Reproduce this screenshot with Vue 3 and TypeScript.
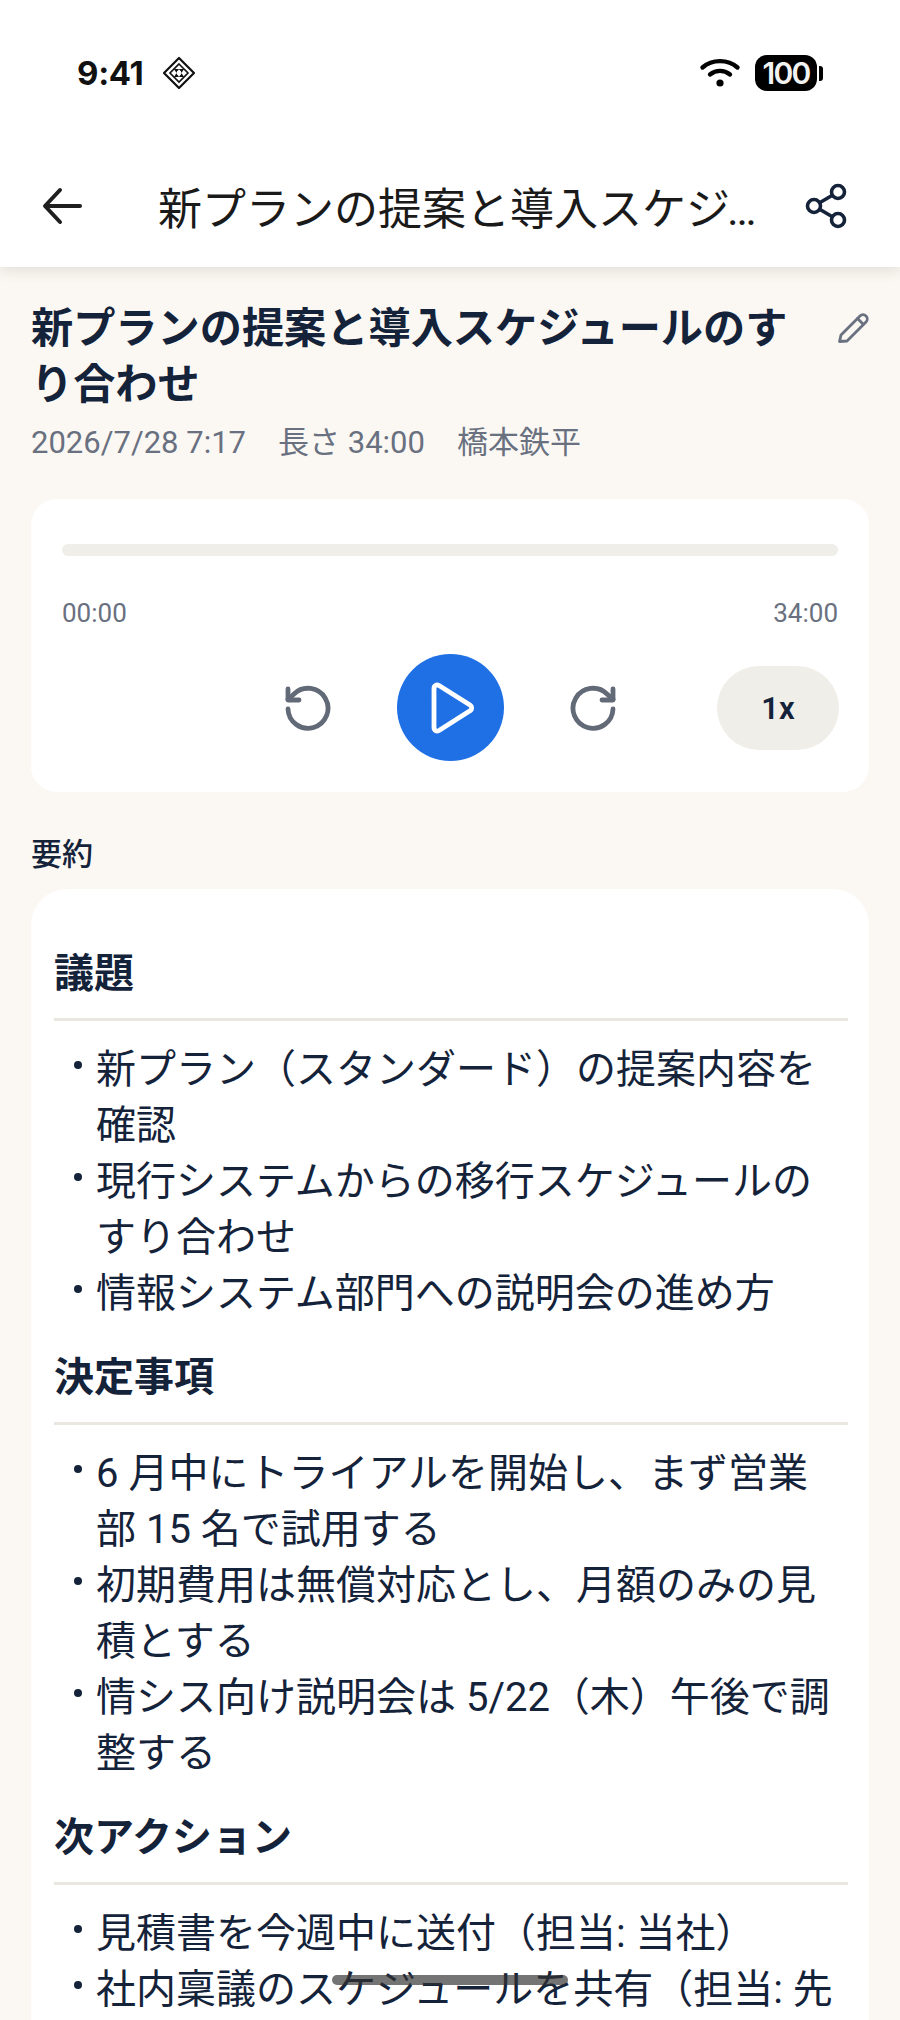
<script setup lang="ts">
interface Section {
  title: string
  items: string[]
}
const sections: Section[] = [
  {
    title: '議題',
    items: [
      '新プラン（スタンダード）の提案内容を確認',
      '現行システムからの移行スケジュールのすり合わせ',
      '情報システム部門への説明会の進め方',
    ],
  },
  {
    title: '決定事項',
    items: [
      '6 月中にトライアルを開始し、まず営業部 15 名で試用する',
      '初期費用は無償対応とし、月額のみの見積とする',
      '情シス向け説明会は 5/22（木）午後で調整する',
    ],
  },
  {
    title: '次アクション',
    items: ['見積書を今週中に送付（担当: 当社）', '社内稟議のスケジュールを共有（担当: 先方）'],
  },
]
</script>

<template>
  <div class="screen">
    <div class="top">
      <div class="status">
        <div class="status-left">
          <span class="clock">9:41</span>
          <svg class="diamond" width="34" height="34" viewBox="0 0 34 34" fill="none" stroke="#111" stroke-width="2.2">
            <path d="M17 2 32 17 17 32 2 17Z" stroke-linejoin="round" />
            <path d="M17 8 26 17 17 26 8 17Z" stroke-width="1.6" />
            <path d="M12 13h10l-5 8zM12 21h10l-5-8z" fill="#111" stroke="none" />
            <circle cx="17" cy="17" r="2.4" fill="#fff" stroke="none" />
          </svg>
        </div>
        <div class="status-right">
          <svg width="42" height="30" viewBox="0 0 40 30" fill="none" stroke="#000" stroke-linecap="round" stroke-width="4.4">
            <path d="M2.5 9.5C12 1 28 1 37.5 9.5" />
            <path d="M10 16.5c6-4.8 14-4.8 20 0" />
            <circle cx="20" cy="25" r="3.6" fill="#000" stroke="none" />
          </svg>
          <div class="battery">
            <span class="battery-body">100</span>
            <span class="battery-cap"></span>
          </div>
        </div>
      </div>
      <header class="appbar">
        <svg class="back" width="44" height="44" viewBox="0 0 44 44" fill="none" stroke="#1f1f1f" stroke-width="4" stroke-linecap="round" stroke-linejoin="round">
          <path d="M40 22H6M20 6 5 22 20 38" />
        </svg>
        <div class="appbar-title">新プランの提案と導入スケジュールのすり合わせ</div>
        <svg class="share" width="46" height="46" viewBox="0 0 46 46" fill="none" stroke="#14233a" stroke-width="3.6">
          <circle cx="34" cy="9" r="6.500" />
          <circle cx="10" cy="23" r="6.500" />
          <circle cx="34" cy="37" r="6.500" />
          <path d="M15.600 19.700 28.400 12.300M15.600 26.300 28.400 33.700" />
        </svg>
      </header>
    </div>

    <main class="content">
      <div class="title-row">
        <h1 class="title">新プランの提案と導入スケジュールのすり合わせ</h1>
        <svg class="pencil" width="36" height="36" viewBox="0 0 36 36" fill="none" stroke="#697080" stroke-width="2.8" stroke-linejoin="round" stroke-linecap="round">
          <path d="M5.500 30.500 7 24 26 5a4.200 4.200 0 0 1 6 6L13 30Z" />
          <path d="M23.500 7.500l5.500 5.500" />
        </svg>
      </div>
      <div class="meta">
        <span>2026/7/28 7:17</span>
        <span>長さ 34:00</span>
        <span>橋本鉄平</span>
      </div>

      <section class="player">
        <div class="track"></div>
        <div class="times">
          <span>00:00</span>
          <span>34:00</span>
        </div>
        <div class="controls">
          <svg class="skip" width="48" height="48" viewBox="0 0 48 48" fill="none" stroke="#626977" stroke-width="4.800" stroke-linecap="round" stroke-linejoin="round">
            <path d="M4 25a20 20 0 1 0 6-15L4 15.500" />
            <path d="M4 5v11h11" />
          </svg>
          <button class="play" type="button">
            <svg width="46" height="52" viewBox="0 0 46 52" fill="none" stroke="#fff" stroke-width="4.800" stroke-linejoin="round">
              <path d="M4 6.500c0-3 2.800-4.300 5-3l31 19.500c2.300 1.400 2.300 4.500 0 5.800L9 48.500c-2.400 1.400-5 0-5-3Z" />
            </svg>
          </button>
          <svg class="skip" width="48" height="48" viewBox="0 0 48 48" fill="none" stroke="#626977" stroke-width="4.800" stroke-linecap="round" stroke-linejoin="round">
            <path d="M44 25a20 20 0 1 1-6-15l6 5.500" />
            <path d="M44 5v11H33" />
          </svg>
          <button class="speed" type="button">1x</button>
        </div>
      </section>

      <div class="label">要約</div>

      <section class="summary">
        <div v-for="section in sections" :key="section.title" class="block">
          <h2 class="block-title">{{ section.title }}</h2>
          <ul class="list">
            <li v-for="item in section.items" :key="item">{{ item }}</li>
          </ul>
        </div>
      </section>
    </main>
    <div class="home-bar"></div>
  </div>
</template>

<style>
html,
body {
  margin: 0;
  background: #fbf8f3;
}
</style>

<style scoped>
.screen {
  position: relative;
  width: 900px;
  height: 2020px;
  overflow: hidden;
  background: #fbf8f3;
  font-family: Roboto, 'Noto Sans CJK JP', sans-serif;
  color: #14233a;
}
.top {
  background: #fff;
  box-shadow: 0 4px 12px rgba(60, 55, 40, 0.13);
  position: relative;
  z-index: 1;
}
.status {
  height: 145px;
  padding: 53px 77px 0 77px;
  box-sizing: border-box;
  display: flex;
  justify-content: space-between;
  align-items: flex-start;
}
.status-left,
.status-right {
  display: flex;
  align-items: center;
  height: 40px;
}
.clock {
  font-family: Inter, sans-serif;
  font-size: 33px;
  font-weight: 700;
  color: #111;
  letter-spacing: -0.3px;
}
.diamond {
  margin-left: 18px;
}
.status-right {
  gap: 14px;
}
.battery {
  display: flex;
  align-items: center;
  gap: 2px;
}
.battery-body {
  width: 62px;
  height: 36px;
  line-height: 36px;
  border-radius: 12px;
  background: #000;
  color: #f2f2f2;
  text-align: center;
  font-family: Inter, sans-serif;
  font-size: 30px;
  font-weight: 600;
  letter-spacing: -1.8px;
}
.battery-cap {
  width: 4px;
  height: 15px;
  border-radius: 0 3px 3px 0;
  background: #000;
}
.appbar {
  height: 122px;
  padding: 0 50px 0 40px;
  display: flex;
  align-items: center;
  box-sizing: border-box;
}
.appbar-title {
  flex: 1;
  min-width: 0;
  margin: 0 34px 0 74px;
  font-size: 44px;
  font-weight: 400;
  color: #1a1a1a;
  white-space: nowrap;
  overflow: hidden;
  text-overflow: ellipsis;
}
.content {
  padding: 34px 31px 0;
}
.title-row {
  display: flex;
  align-items: flex-start;
  gap: 22px;
}
.title {
  flex: 1;
  margin: 0;
  font-size: 42.200px;
  line-height: 56px;
  font-weight: 700;
  color: #14233a;
}
.pencil {
  margin-top: 10px;
  margin-right: -1px;
  flex: none;
}
.meta {
  display: flex;
  gap: 32px;
  margin-top: 7px;
  font-size: 31px;
  line-height: 46px;
  color: #697080;
}
.player {
  margin-top: 33px;
  height: 293px;
  padding: 45px 31px 0;
  box-sizing: border-box;
  background: #fff;
  border-radius: 26px;
}
.track {
  height: 12px;
  border-radius: 6px;
  background: #f0eee8;
}
.times {
  display: flex;
  justify-content: space-between;
  margin-top: 40px;
  font-size: 26px;
  line-height: 34px;
  color: #697080;
}
.controls {
  position: relative;
  display: flex;
  justify-content: center;
  align-items: center;
  gap: 65px;
  margin-top: 24px;
}
.skip {
  flex: none;
}
.play {
  width: 107px;
  height: 107px;
  border: 0;
  padding: 0 0 0 6px;
  border-radius: 50%;
  background: #1f6fe5;
  display: flex;
  align-items: center;
  justify-content: center;
}
.speed {
  position: absolute;
  right: -1px;
  top: 12px;
  width: 122px;
  height: 84px;
  border: 0;
  padding: 0;
  border-radius: 42px;
  background: #f0eee8;
  color: #14233a;
  font-family: Roboto, sans-serif;
  font-size: 31px;
  font-weight: 600;
}
.label {
  margin-top: 42px;
  font-size: 31px;
  line-height: 42px;
  font-weight: 500;
  color: #14233a;
}
.summary {
  margin-top: 13px;
  padding: 43px 21px 40px 23px;
  background: #fff;
  border-radius: 36px;
}
.block-title {
  margin: 0;
  padding: 14px 0 16px;
  font-size: 40px;
  line-height: 56px;
  font-weight: 700;
  border-bottom: 3px solid #e9e7df;
  color: #14233a;
}
.list {
  margin: 0;
  padding: 21px 4px 14px 0;
  list-style: none;
}
.list li {
  position: relative;
  padding-left: 42px;
  font-size: 40px;
  line-height: 56px;
  color: #14233a;
}
.list li::before {
  content: '';
  position: absolute;
  left: 20px;
  top: 19px;
  width: 8px;
  height: 8px;
  border-radius: 50%;
  background: #14233a;
}
.home-bar {
  position: absolute;
  left: 332px;
  top: 1975px;
  width: 236px;
  height: 10px;
  border-radius: 5px;
  background: rgba(50, 50, 50, 0.68);
}
</style>
